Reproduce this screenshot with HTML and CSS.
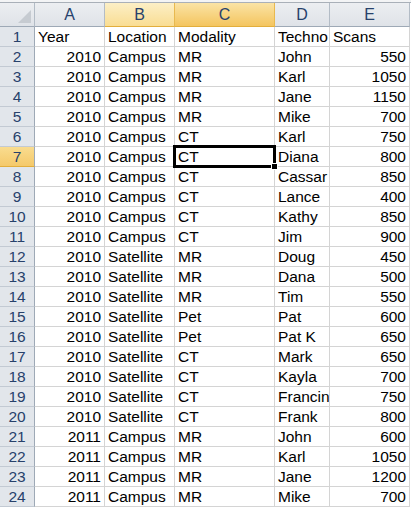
FILE: index.html
```html
<!DOCTYPE html>
<html lang="en">
<head>
    <meta charset="UTF-8">
    <meta name="viewport" content="width=device-width, initial-scale=1.0">
    <title>Scans</title>
    <link rel="stylesheet" href="styles.css">
</head>
<body>
    <div class="top-strip"></div>
    <table class="sheet">
        <colgroup>
            <col class="w-head">
            <col class="w-a">
            <col class="w-b">
            <col class="w-c">
            <col class="w-d">
            <col class="w-e">
        </colgroup>
        <thead>
            <tr>
                <th class="corner"><span class="tri"></span></th>
                <th>A</th>
                <th class="sel">B</th>
                <th class="sel active">C</th>
                <th>D</th>
                <th>E</th>
            </tr>
        </thead>
        <tbody>
            <tr><th>1</th><td>Year</td><td>Location</td><td>Modality</td><td>Techno</td><td>Scans</td></tr>
            <tr><th>2</th><td class="num">2010</td><td>Campus</td><td>MR</td><td>John</td><td class="num">550</td></tr>
            <tr><th>3</th><td class="num">2010</td><td>Campus</td><td>MR</td><td>Karl</td><td class="num">1050</td></tr>
            <tr><th>4</th><td class="num">2010</td><td>Campus</td><td>MR</td><td>Jane</td><td class="num">1150</td></tr>
            <tr><th>5</th><td class="num">2010</td><td>Campus</td><td>MR</td><td>Mike</td><td class="num">700</td></tr>
            <tr><th>6</th><td class="num">2010</td><td>Campus</td><td>CT</td><td>Karl</td><td class="num">750</td></tr>
            <tr><th class="sel-row">7</th><td class="num">2010</td><td>Campus</td><td class="cursor">CT</td><td>Diana</td><td class="num">800</td></tr>
            <tr><th>8</th><td class="num">2010</td><td>Campus</td><td>CT</td><td>Cassar</td><td class="num">850</td></tr>
            <tr><th>9</th><td class="num">2010</td><td>Campus</td><td>CT</td><td>Lance</td><td class="num">400</td></tr>
            <tr><th>10</th><td class="num">2010</td><td>Campus</td><td>CT</td><td>Kathy</td><td class="num">850</td></tr>
            <tr><th>11</th><td class="num">2010</td><td>Campus</td><td>CT</td><td>Jim</td><td class="num">900</td></tr>
            <tr><th>12</th><td class="num">2010</td><td>Satellite</td><td>MR</td><td>Doug</td><td class="num">450</td></tr>
            <tr><th>13</th><td class="num">2010</td><td>Satellite</td><td>MR</td><td>Dana</td><td class="num">500</td></tr>
            <tr><th>14</th><td class="num">2010</td><td>Satellite</td><td>MR</td><td>Tim</td><td class="num">550</td></tr>
            <tr><th>15</th><td class="num">2010</td><td>Satellite</td><td>Pet</td><td>Pat</td><td class="num">600</td></tr>
            <tr><th>16</th><td class="num">2010</td><td>Satellite</td><td>Pet</td><td>Pat K</td><td class="num">650</td></tr>
            <tr><th>17</th><td class="num">2010</td><td>Satellite</td><td>CT</td><td>Mark</td><td class="num">650</td></tr>
            <tr><th>18</th><td class="num">2010</td><td>Satellite</td><td>CT</td><td>Kayla</td><td class="num">700</td></tr>
            <tr><th>19</th><td class="num">2010</td><td>Satellite</td><td>CT</td><td>Francin</td><td class="num">750</td></tr>
            <tr><th>20</th><td class="num">2010</td><td>Satellite</td><td>CT</td><td>Frank</td><td class="num">800</td></tr>
            <tr><th>21</th><td class="num">2011</td><td>Campus</td><td>MR</td><td>John</td><td class="num">600</td></tr>
            <tr><th>22</th><td class="num">2011</td><td>Campus</td><td>MR</td><td>Karl</td><td class="num">1050</td></tr>
            <tr><th>23</th><td class="num">2011</td><td>Campus</td><td>MR</td><td>Jane</td><td class="num">1200</td></tr>
            <tr><th>24</th><td class="num">2011</td><td>Campus</td><td>MR</td><td>Mike</td><td class="num">700</td></tr>
        </tbody>
    </table>
</body>
</html>
```

FILE: styles.css
```css
body {
    margin: 0;
    padding: 0;
    background-color: #ffffff;
    font-family: "Liberation Sans", Arial, sans-serif;
    font-size: 15.5px;
    color: #000000;
    overflow: hidden;
}
.top-strip {
    height: 2px;
    background-color: #f3f4f5;
    border-bottom: 1px solid #a9b0b8;
}
.sheet {
    border-collapse: separate;
    border-spacing: 0;
    table-layout: fixed;
    width: 410px;
}
.w-head { width: 35px; }
.w-a { width: 70px; }
.w-b { width: 70px; }
.w-c { width: 100px; }
.w-d { width: 55px; }
.w-e { width: 80px; }
.sheet th,
.sheet td {
    padding: 0 3px;
    white-space: nowrap;
    overflow: hidden;
    border-right: 1px solid #d4d4d4;
    border-bottom: 1px solid #d4d4d4;
    line-height: 19px;
    height: 19px;
    font-weight: normal;
}
.sheet td.num {
    text-align: right;
}
.sheet thead th {
    height: 23px;
    line-height: 23px;
    font-size: 16px;
    text-align: center;
    color: #27416b;
    background: linear-gradient(#eceef1, #dfe3e8);
    border-right: 1px solid #b3bcc6;
    border-bottom: 1px solid #9ea9b6;
}
.sheet tbody th {
    text-align: center;
    color: #27416b;
    background-color: #e2e6eb;
    border-right: 1px solid #9ea9b6;
    border-bottom: 1px solid #c3cad3;
}
.sheet thead th.sel {
    background: linear-gradient(#fcefc6, #f9dd93);
    border-right-color: #e8b94f;
    border-bottom-color: #e2ae3c;
}
.sheet thead th.active {
    background: linear-gradient(#fae3a5, #f4c55f);
}
.sheet tbody th.sel-row {
    background: linear-gradient(#f9dc8f, #f5c96a);
    border-bottom-color: #e2ae3c;
}
.corner {
    position: relative;
}
.tri {
    position: absolute;
    right: 3px;
    bottom: 3px;
    width: 0;
    height: 0;
    border-left: 13px solid transparent;
    border-bottom: 13px solid #c6cbd1;
}
.sheet td.cursor {
    position: relative;
    overflow: visible;
}
.cursor::after {
    content: "";
    position: absolute;
    left: -2px;
    top: -2px;
    right: -2px;
    bottom: -2px;
    border: 3px solid #000000;
}
.cursor::before {
    content: "";
    position: absolute;
    right: -4px;
    bottom: -4px;
    width: 5px;
    height: 5px;
    background-color: #000000;
    border: 1px solid #ffffff;
    z-index: 1;
}
```
